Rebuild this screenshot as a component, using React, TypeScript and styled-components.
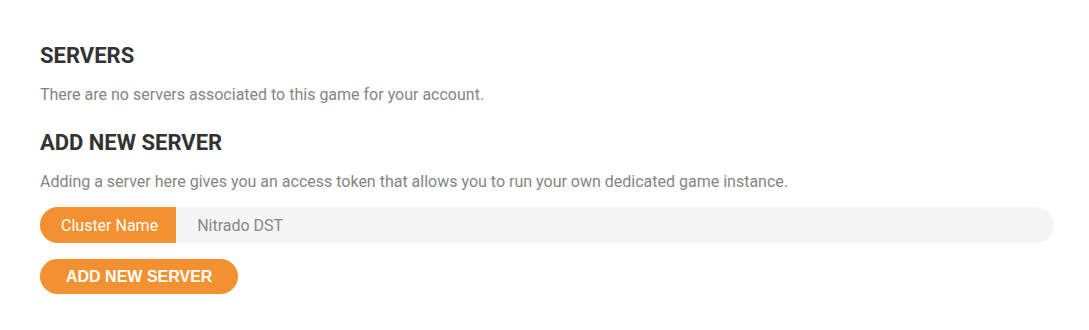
import React from "react";
import styled, { createGlobalStyle } from "styled-components";

const Global = createGlobalStyle`
  html, body { margin: 0; padding: 0; background: #ffffff; }
  * { box-sizing: border-box; }
`;

const ORANGE = "#f39130";

const Page = styled.div`
  padding: 43px 35px 0 40px;
  font-family: Roboto, "Liberation Sans", Arial, sans-serif;
`;

const Heading = styled.h2`
  margin: 0 0 14px;
  font-size: 22px;
  line-height: 26px;
  font-weight: 700;
  color: #333333;
  text-transform: uppercase;
`;

const Text = styled.p<{ $mb: number }>`
  margin: 0 0 ${(p) => p.$mb}px;
  font-size: 16px;
  line-height: 24px;
  color: #858585;
`;

const InputGroup = styled.div`
  display: flex;
  height: 36px;
  border-radius: 18px;
  overflow: hidden;
  background: #f5f5f5;
  margin-bottom: 16px;
`;

const Label = styled.span`
  display: flex;
  align-items: center;
  padding: 0 18px 0 21px;
  background: ${ORANGE};
  color: #ffffff;
  font-size: 16px;
  white-space: nowrap;
`;

const Input = styled.input`
  flex: 1;
  border: none;
  outline: none;
  background: transparent;
  padding: 0 0 0 21px;
  font-family: Roboto, "Liberation Sans", Arial, sans-serif;
  font-size: 16px;
  color: #888888;
`;

const Button = styled.button`
  height: 35px;
  padding: 0 26px;
  border: none;
  border-radius: 18px;
  background: ${ORANGE};
  color: #ffffff;
  font-family: "Liberation Sans", Arial, sans-serif;
  font-weight: 700;
  font-size: 16px;
  text-transform: uppercase;
  cursor: pointer;
`;

export default function App() {
  return (
    <>
      <Global />
      <Page>
        <Heading>Servers</Heading>
        <Text $mb={23}>There are no servers associated to this game for your account.</Text>
        <Heading>Add new server</Heading>
        <Text $mb={13}>
          Adding a server here gives you an access token that allows you to run your own dedicated game instance.
        </Text>
        <InputGroup>
          <Label>Cluster Name</Label>
          <Input defaultValue="Nitrado DST" />
        </InputGroup>
        <Button>Add new server</Button>
      </Page>
    </>
  );
}
